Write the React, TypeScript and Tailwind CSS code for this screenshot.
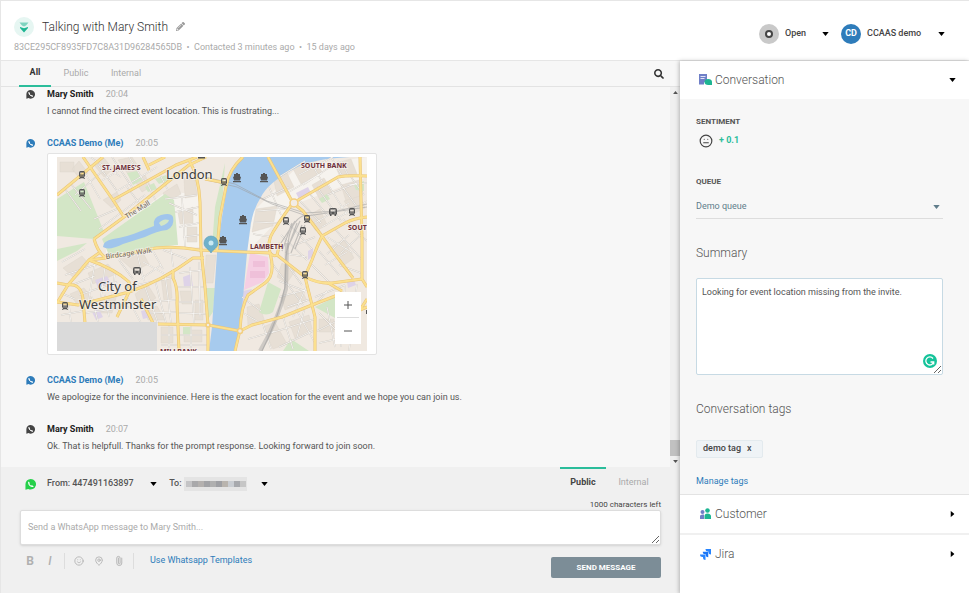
import React from "react";
import { MapPin, Meh, Paperclip, Smile } from "lucide-react";
import { FaPencilAlt, FaSearch } from "react-icons/fa";
import clsx from "clsx";

type Message = {
  author: string;
  time: string;
  mine?: boolean;
  text?: string;
};

const messages: Message[] = [
  {
    author: "Mary Smith",
    time: "20:04",
    text: "I cannot find the cirrect event location. This is frustrating...",
  },
  { author: "CCAAS Demo (Me)", time: "20:05", mine: true },
  {
    author: "CCAAS Demo (Me)",
    time: "20:05",
    mine: true,
    text: "We apologize for the inconvinience. Here is the exact location for the event and we hope you can join us.",
  },
  {
    author: "Mary Smith",
    time: "20:07",
    text: "Ok. That is helpfull. Thanks for the prompt response. Looking forward to join soon.",
  },
];

const Caret = ({ className }: { className?: string }) => (
  <svg viewBox="0 0 8 5" aria-hidden="true" className={clsx("h-1 w-[7px] shrink-0 fill-current", className)}>
    <path d="M0 0h8L4 5z" />
  </svg>
);

const WhatsappBubble = ({ className }: { className?: string }) => (
  <svg viewBox="0 0 24 24" aria-hidden="true" className={clsx("shrink-0", className)}>
    <path fill="currentColor" d="M12.500 0a11.500 11.500 0 1 1-5.500 21.600L1 23.500V12A11.500 11.500 0 0 1 12.500 0z" />
    <path
      fill="none"
      stroke="#fff"
      strokeWidth="2.600"
      strokeLinecap="round"
      d="M8 7.500C8 12.500 12 16.300 17 16.300M8 7.200l1 2.400M17.300 16.300l-2.600-1.300"
    />
  </svg>
);

/* MAP */
const majorRoads = [
  "M186 0Q172 12 169 30L163 60 160 93",
  "M211 0L236 46",
  "M236 46L281 20Q290 18 310 19",
  "M236 46Q228 56 216 75 210 84 213 96",
  "M236 46L246 54 265 79 277 96 296 121",
  "M265 79L288 66Q298 61 310 60",
  "M265 79Q259 92 255 103L248 119",
  "M99 91Q120 89 142 93L213 96Q216 100 220 98L248 120Q262 127 275 126L305 122",
  "M213 96Q219 118 208 126L191 138Q184 150 183 173L178 194",
  "M220 98L223 86M248 120L258 160V194",
  "M151 168L183 174 195 168 225 160 255 148 286 136",
  "M305 83V122L310 130M303 0L305 83M271 126L285 134",
  "M144 93L148 130 151 168V194",
  "M0 38L46 0M26 0L56 43 119 8 140 0",
  "M37 82L67 60 132 8 149 0M56 43L67 60",
  "M132 3Q142 20 143 45L144 93M86 0L92 13M92 8L108 0",
  "M37 82Q41 96 49 101L99 91M42 96L32 103 11 128 0 146",
  "M32 103Q58 112 72 125V135L60 160M32 103L49 101",
  "M0 126L11 128Q24 126 26 142L28 166M0 145L21 148 72 135Q105 124 136 101L147 101",
  "M116 113V121Q121 130 120 146L122 194M101 167L152 168M84 142L96 166",
  "M310 150L303 153 310 142M148 22L169 26",
];

const minorRoads = [
  "M8 32L24 54M14 27L34 52M28 16L43 42M40 6L60 34M55 0L75 30M72 0L88 26M33 0L64 20M18 38L48 12M44 24L75 6M60 34L100 10",
  "M37 62L60 52M42 72L88 38M70 30L85 50M88 22L99 44M103 18L111 33M108 42L140 38M118 55L142 50M122 70L142 66M126 80L142 78M125 40L128 90M112 46L140 58",
  "M5 105L28 92M8 118L44 106M15 128L38 119M22 138L60 125M4 136L18 142M4 158L26 154M12 148L14 166M35 140L41 165M48 138L52 160M38 106L31 146M48 110L44 140M58 115L55 142M28 156L72 150M70 140L84 166M88 130L101 166M98 123L109 166M108 116L114 166M88 145L119 143M92 156L120 155M80 128L118 120M84 122L104 108M86 105L110 118",
  "M122 116L146 113M121 130L148 130M122 145L149 145M121 156L150 157M133 110L137 166M142 105L143 160M104 178H151M112 168V194M134 168V194M104 188H151M80 96L87 124M62 103L76 122M96 94L106 112M106 93L130 102M114 92L116 110",
  "M206 42L232 30M200 54L228 52M197 65L222 66M196 77L214 80M212 30L224 58M222 20L248 4M230 36L265 16M241 42L264 66M252 36L270 58M260 30L284 64M270 26L290 58M280 22L300 50M246 28L282 4M242 18L276 0M254 6L266 26M284 4L292 20M258 66L292 46M265 70L310 44M294 20L307 38M270 38L300 26M274 0L285 19M290 28L310 26",
  "M231 66L255 92M224 78L250 103M270 80L296 96M278 72L305 103M290 68L310 84M284 96L306 76M270 97L292 78M262 94L282 118M253 106L273 126M282 108L304 116M268 108L290 95M286 62L301 74M230 97L250 100M238 88L258 80",
  "M186 156L200 164M185 140L204 154M191 182L218 174M205 164L214 192M226 160L236 192M240 154L258 186M248 150L240 180M214 176L258 162M222 190L256 174M262 156L286 180M260 174L302 153M262 186L298 178M270 150L278 190M258 140L288 128M222 124L248 134M214 105L246 148M232 110L245 128M222 140L252 132M230 150L254 142M250 128L236 160M270 134L258 148M288 128L284 190M300 127L292 194",
];

const blocks = [
  "M3 5h14v10H3zM22 4l9 12-8 6-8-10zM37 8l10 12 9-8-9-11zM61 3l12 17 10-8-8-12zM78 24l10-6 6 12-9 5zM46 43l14-8 4 8-9 8z",
  "M127 21l11 2 2 16-12 2zM121 56l15-6v16l-13 1zM130 70h10v15h-10zM106 36l14-9 4 10-14 8z",
  "M6 111l19-12 7 8-14 15zM31 116l20-9 8 10-23 10zM13 137l14-6 8 10-16 5zM42 142l18-5-5 19H43zM78 137l13-9 8 13-16 10zM88 153l12-4 8 14H91zM104 120l9-3 2 24-8 3zM123 134h12v13h-10zM138 143h8v20h-8zM127 173h18v12h-18zM104 170h12v16h-12zM60 99l25-5 7 13-15 7z",
  "M199 52l21-3-4 20-21 6zM217 24l13-8 7 14-17 9zM235 10l22-9 8 14-21 12zM255 28l12-7 9 14-13 8zM277 6l17-4 6 15-17 3zM249 60l14-8 7 16-11 6zM284 28l18-5 2 20-14 4z",
  "M225 106l13 8-8 12-10-6zM190 150l12-3 6 18-17 4zM206 170l12-5 12 22-14 5zM232 165l20-7 3 14-17 9zM224 140l22-5 4 9-22 9zM273 90l14-7 10 18-11 8zM262 162h15v13h-15zM287 44l16-5 5 12-12 6zM149 98h10l-3 28h-8z",
];

const trainStops = [
  [25, 18],
  [25, 36],
  [167, 25],
  [229, 64],
  [250, 62],
  [246, 74],
  [295, 55],
  [248, 118],
  [8, 149],
];
const busStops = [
  [80, 114],
  [276, 55],
];
const piers = [
  [180, 21],
  [207, 21],
  [186, 63],
  [166, 84],
];

const LocationMap = () => (
  <div className="relative">
    <svg viewBox="0 0 310 194" role="img" aria-label="Map of Westminster and Lambeth" className="block w-full">
      <rect width="310" height="194" fill="#f0e9e1" />
      <path d="M49 80L110 34 143 38V90L99 91 49 101zM196 55L240 10 310 0V20L236 48 190 95z" fill="#f6f3ee" />
      <g fill="#e7dfd5" stroke="#dcd3c9" strokeWidth=".4">
        {blocks.map((d) => (
          <path key={d} d={d} />
        ))}
      </g>
      <g fill="#d3e6c6">
        <path d="M0 42L27 25 47 75 37 82 0 79z" />
        <path d="M45 82L108 37 117 43 121 88 98 90 52 98z" />
        <path d="M70 16l10-2 5 9-9 5zM88 30l9-4 3 6-9 3zM98 22l11-4 3 5-10 4z" />
        <path d="M168 6L164 66 158 90 155 90 158 50zM149 131h9l-2 24-7 10z" />
        <path d="M211 125L224 132 216 155Q209 160 202 155zM258 150L278 140V161zM234 182L252 194H226z" />
        <path d="M297 28l10-4v10l-8-1zM262 42l8-5 3 5-8 4zM126 170h8v8h-8zM0 92L30 86 20 94 0 104z" />
      </g>
      <g fill="#ded3e8">
        <path d="M239 36l12-6 3 6-12 6zM126 120l8-3 2 12-9 1zM38 123l12-4 4 7-13 5zM84 154l8-2 2 8-8 2zM35 155l7-3 4 8-7 3zM290 125l7-2 2 5-8 3zM251 94l5-3v8l-5 4zM186 134l9-2-7 18-4 4z" />
      </g>
      <path d="M193 96L211 100 212 116 206 125 187 133z" fill="#f5cfe3" />
      <path d="M196 104h12v6h-12zM193 114h15v7h-15z" fill="#efc0d9" />
      <path
        d="M186 0H293Q252 2 235 13 211 26 204 40 195 54 193 73L190 96 183 174 179 194H152L155 170 160 96 165 60 171 23Q174 8 186 0z"
        fill="#a7cbee"
      />
      <path
        d="M46 90Q46 84 56 82 70 80 84 74L97 69Q95 61 104 58 114 55 116 60 118 69 110 73 100 74 88 80L66 87Q52 94 46 90z"
        fill="#a0c5ec"
      />
      <path d="M102 66Q106 61 112 63 111 67 104 69z" fill="#d3e6c6" />
      <g fill="none" stroke="#cbc5bd" strokeWidth="1.400">
        {minorRoads.map((d) => (
          <path key={d} d={d} />
        ))}
      </g>
      <g fill="none" stroke="#fbfaf7" strokeWidth=".8">
        {minorRoads.map((d) => (
          <path key={d} d={d} />
        ))}
      </g>
      {/* tracks go over the water */}
      <g fill="none" stroke="#9c9c9c" strokeOpacity=".55">
        <path d="M148 20L178 27 210 44 248 56 280 54 310 47M150 23L180 30 215 47 250 59 310 50" />
        <path
          d="M248 58Q236 62 232 80L229 100 228 130Q222 160 205 194M235 66L225 94M240 66L229 96M245 68L234 96M238 64L224 86M248 68L238 92M243 64L231 90"
          strokeWidth="1.200"
        />
        <path d="M230 86L229 132Q220 165 203 194" strokeWidth="4" strokeOpacity=".4" />
      </g>
      <g fill="none" stroke="#e9c377" strokeWidth="3" strokeLinejoin="round">
        {majorRoads.map((d) => (
          <path key={d} d={d} />
        ))}
      </g>
      <g fill="none" stroke="#fbe08f" strokeWidth="2" strokeLinejoin="round">
        {majorRoads.map((d) => (
          <path key={d} d={d} />
        ))}
      </g>
      <g fill="#f2ece5" stroke="#f3cf80" strokeWidth="1.500">
        <circle cx="237" cy="46" r="4" />
        <circle cx="183" cy="174" r="2.500" />
        <circle cx="151" cy="168" r="2" />
      </g>
      <g fill="#555">
        {trainStops.map(([x, y]) => (
          <path
            key={`${x}-${y}`}
            fillRule="evenodd"
            transform={`translate(${x - 3} ${y - 4})`}
            d="M1.500 0h3Q6 0 6 2v3L5 6.200 6 8H5L4.500 7.200h-3L1 8H0l1-1.800L0 5V2Q0 0 1.500 0zM1.200 1.500v2h3.600v-2zM1.500 4.500v1h1v-1zM3.500 4.500v1h1v-1z"
          />
        ))}
        {busStops.map(([x, y]) => (
          <path
            key={`${x}-${y}`}
            fillRule="evenodd"
            transform={`translate(${x - 4} ${y - 4})`}
            d="M2 0h4q2 0 2 2v4.500H7V8H5.500V6.500h-3V8H1V6.500H0V2q0-2 2-2zM1.500 1.500v2.200h5V1.500zM1.500 4.600v1h1v-1zM5.500 4.600v1h1v-1z"
          />
        ))}
        {piers.map(([x, y]) => (
          <path
            key={`${x}-${y}`}
            transform={`translate(${x - 4} ${y - 5})`}
            d="M3 0h2v1h2v2.500l1 .5-1 3.500H1L0 4l1-.5V1h2zM0 8h8v1.200H0z"
          />
        ))}
        <path d="M141 0h7v1.500h-7zM309 153h1v4h-1z" />
      </g>
      <rect y="165" width="100" height="29" fill="#dadada" />
      <g className="font-['Noto_Sans']" fill="#3d3d3d" stroke="#f7f3ee" strokeWidth="2" strokeOpacity=".6" paintOrder="stroke">
        <g fontSize="13">
          <text x="109" y="22">London</text>
          <text x="41" y="134">City of</text>
          <text x="22" y="152">Westminster</text>
        </g>
        <g fontSize="7" fill="#6b6257">
          <text transform="translate(70 62) rotate(-32)">The Mall</text>
          <text transform="translate(49 102) rotate(-8)">Birdcage Walk</text>
        </g>
        <g fontSize="7" fontWeight="700" fill="#6e2f3a">
          <text x="45" y="13">ST. JAMES'S</text>
          <text x="244" y="11">SOUTH BANK</text>
          <text x="193" y="92">LAMBETH</text>
          <text x="291" y="73">SOUT</text>
          <text x="103" y="197">MILLBANK</text>
        </g>
      </g>
      <path d="M154 96C152 92 147 91 147 86a7 7 0 0 1 14 0c0 5-5 6-7 10z" fill="#6fb1cb" stroke="#5a9db8" strokeWidth=".6" />
      <circle cx="154" cy="86" r="2.500" fill="#c9e9f3" />
    </svg>
    <div className="absolute right-1.5 bottom-[7px] flex w-[26px] flex-col bg-white px-0.5 text-[#555]">
      <button type="button" aria-label="Zoom in" className="flex h-[26px] items-center justify-center border-b border-[#ddd]">
        <svg viewBox="0 0 8 8" className="size-2 stroke-current">
          <path d="M0 4h8M4 0v8" />
        </svg>
      </button>
      <button type="button" aria-label="Zoom out" className="flex h-[26px] items-center justify-center">
        <svg viewBox="0 0 8 8" className="size-2 stroke-current">
          <path d="M0 4h8" />
        </svg>
      </button>
    </div>
  </div>
);

/* HEADER */
const PageHeader = () => (
  <header className="flex h-[60px] shrink-0 items-center justify-between border-b border-[#e6e6e6] bg-white pr-6 pl-[13px]">
    <div className="pt-3">
      <div className="flex items-center gap-2">
        <svg viewBox="0 0 20 20" aria-hidden="true" className="size-5">
          <circle cx="10" cy="10" r="10" fill="#e6f6f2" />
          <path d="M5.500 5.500h9L12 8.500 10 9.500 8 8.500z" fill="#7ed3bf" />
          <path d="M6 10l4 1.200 4-1.200v1l-4 4.500-4-4.500z" fill="#1db592" />
        </svg>
        <h1 className="text-[12px] leading-5 font-light text-[#333]">Talking with Mary Smith</h1>
        <button type="button" aria-label="Rename conversation" className="text-[#999]">
          <FaPencilAlt className="size-[9px]" />
        </button>
      </div>
      <p className="text-[9px] leading-5 text-[#aaa]">
        83CE295CF8935FD7C8A31D96284565DB &nbsp;•&nbsp; Contacted 3 minutes ago &nbsp;•&nbsp; 15 days ago
      </p>
    </div>
    <div className="flex items-center gap-3 pt-1.5 text-[9px] font-medium text-[#444]">
      <label className="flex items-center gap-1.5">
        <span className="flex size-5 items-center justify-center rounded-full bg-[#c9c9c9]">
          <span className="size-2 rounded-full border-2 border-[#444] bg-white" />
        </span>
        <select aria-label="Status" className="w-[31px] appearance-none pt-px outline-none">
          <option>Open</option>
        </select>
        <Caret className="text-black" />
      </label>
      <button type="button" className="flex items-center gap-1.5">
        <span className="flex size-5 items-center justify-center rounded-full bg-[#2e7cba] text-[9px] font-bold text-white">
          CD
        </span>
        <span className="w-[59px] pt-px text-left">CCAAS demo</span>
        <Caret className="ml-1.5 text-black" />
      </button>
    </div>
  </header>
);

const MessageItem = ({ message }: { message: Message }) => (
  <li className="flex gap-3">
    <WhatsappBubble className={clsx("mt-[3px] size-[9px]", message.mine ? "text-[#2e7cba]" : "text-[#444]")} />
    <div>
      <div className="flex gap-3 text-[9px] leading-[15px]">
        <span className={clsx("font-bold", message.mine ? "text-[#2e7cba]" : "text-[#222]")}>{message.author}</span>
        <span className="text-[#aaa]">{message.time}</span>
      </div>
      {message.text ? (
        <p className="text-[9px] leading-[18px] text-[#555]">{message.text}</p>
      ) : (
        <div className="mt-0.5 mb-0.5 w-[330px] rounded-xs border border-[#e3e3e3] bg-white px-[9px] py-[3px]">
          <LocationMap />
        </div>
      )}
    </div>
  </li>
);

const Scrollbar = () => (
  <div aria-hidden="true" className="flex w-2.5 shrink-0 flex-col items-center bg-[#f0f0f0] py-1 text-[#555]">
    <Caret className="h-[3px] w-[5px] rotate-180" />
    <div className="mt-auto mb-1 h-4 w-full bg-[#c1c1c1]" />
    <Caret className="h-[3px] w-[5px]" />
  </div>
);

/* MESSAGE COMPOSER */
const mosaic = ["#c4c4c6", "#a9a9ab", "#b4b1af", "#a2a3a6", "#b0b0b0", "#9fa0a4", "#b9b4ae", "#c9cdd2", "#a7a9ad", "#c6c6c6"];

const Composer = () => (
  <form className="shrink-0 bg-[#f0f0f0] pr-[19px] pb-4 pl-[19px]" onSubmit={(e) => e.preventDefault()}>
    <div className="flex items-start justify-between">
      <div className="flex h-8 items-center pt-0.5 pl-[5px] text-[9px] font-medium text-[#555]">
        <WhatsappBubble className="size-[11px] text-[#25d04a]" />
        <label className="ml-[11px] flex items-center gap-0.5">
          From:
          <select className="w-[76px] appearance-none outline-none">
            <option>447491163897</option>
          </select>
          <Caret className="text-black" />
        </label>
        <button type="button" aria-label="Recipient number" className="ml-3 flex items-center gap-0.5">
          To:
          <svg viewBox="0 0 63 14" className="h-3.5 w-[63px]" aria-hidden="true">
            <rect width="63" height="14" fill="#e4e4e4" />
            {mosaic.map((color, i) => (
              <rect key={i} x={2 + i * 6} y="4" width="6" height="6" fill={color} />
            ))}
          </svg>
          <Caret className="ml-3 text-black" />
        </button>
      </div>
      <div className="flex text-[9px] leading-[26px]">
        <button type="button" className="w-[46px] border-t-2 border-[#2bbd9b] font-bold text-[#444]">
          Public
        </button>
        <button type="button" className="w-[55px] border-t-2 border-transparent text-[#aaa]">
          Internal
        </button>
      </div>
    </div>
    <p className="text-right text-[8px] leading-[11px] text-[#444]">1000 characters left</p>
    <textarea
      aria-label="Message"
      placeholder="Send a WhatsApp message to Mary Smith..."
      className="block h-[35px] w-full rounded-xs border border-[#ddd] bg-white px-[7px] py-2 text-[9px] leading-4 shadow outline-none placeholder:text-[#aaa]"
    />
    <div className="mt-3 flex items-start">
      <div className="flex h-2 items-center text-[#b0b0b0]">
        <button type="button" aria-label="Bold" className="w-5 text-[12px] font-bold">
          B
        </button>
        <button type="button" aria-label="Italic" className="w-5 text-[12px] font-medium italic">
          I
        </button>
        <span className="mx-1 h-4 w-px bg-[#ddd]" />
        <button type="button" aria-label="Insert emoji" className="flex w-5 justify-center">
          <Smile className="size-2.5" />
        </button>
        <button type="button" aria-label="Share location" className="flex w-5 justify-center">
          <MapPin className="size-2.5" />
        </button>
        <button type="button" aria-label="Attach file" className="flex w-5 justify-center">
          <Paperclip className="size-2.5 -rotate-45" />
        </button>
        <span className="mx-1 h-4 w-px bg-[#ddd]" />
        <a href="#templates" className="ml-3 text-[9px] text-[#2e7cba]">
          Use Whatsapp Templates
        </a>
      </div>
      <button type="submit" className="ml-auto h-[21px] w-[110px] rounded-xs bg-[#7c8d97] text-[8px] font-bold text-white">
        SEND MESSAGE
      </button>
    </div>
  </form>
);

/* SIDEBAR */
const ConversationIcon = () => (
  <svg viewBox="0 0 13 12" aria-hidden="true" className="h-3 w-[13px]">
    <path d="M0 0h8v6L5 8.500v2H0z" fill="#6f7fc7" />
    <path d="M1.500 2.500h5M1.500 4.500h4" stroke="#dfe3f6" />
    <path d="M9.200 5c2.300 0 3.800 1.300 3.800 3v3H9.200C7 11 5.500 9.800 5.500 8s1.400-3 3.700-3z" fill="#1db592" />
  </svg>
);

const CustomerIcon = () => (
  <svg viewBox="0 0 11 12" aria-hidden="true" className="h-3 w-[13px]">
    <circle cx="2.500" cy="4" r="2" fill="#6f7fc7" />
    <path d="M0 11V8q0-1.500 2.500-1.500h1.500V11z" fill="#6f7fc7" />
    <circle cx="7.500" cy="2.500" r="2.300" fill="#1db592" />
    <path d="M4.500 11V8q0-2.500 3-2.500T11 8v3z" fill="#1db592" />
  </svg>
);

const JiraIcon = () => (
  <svg viewBox="0 0 22 22" aria-hidden="true" className="h-[11px] w-[13px]">
    <path d="M11 0h11v11a5 5 0 0 1-5-5V5h-1a5 5 0 0 1-5-5z" fill="#2684ff" />
    <path d="M5.500 5.500h11v11a5 5 0 0 1-5-5v-1h-1a5 5 0 0 1-5-5z" fill="#1a75f5" />
    <path d="M0 11h11v11a5 5 0 0 1-5-5v-1H5a5 5 0 0 1-5-5z" fill="#2684ff" />
  </svg>
);

type PanelHeaderProps = { icon: React.ReactNode; title: string; open?: boolean };

const PanelHeader = ({ icon, title, open }: PanelHeaderProps) => (
  <button
    type="button"
    aria-expanded={!!open}
    className="flex h-[38px] w-full items-center gap-[3px] bg-white pr-[13px] pl-[19px] text-[12px] font-light text-[#555]"
  >
    {icon}
    {title}
    <Caret className={clsx("ml-auto text-black", !open && "-rotate-90")} />
  </button>
);

const Sidebar = () => (
  <aside className="z-10 flex w-[289px] shrink-0 flex-col bg-white shadow-[-1px_0_4px_rgba(0,0,0,0.25)]">
    <PanelHeader icon={<ConversationIcon />} title="Conversation" open />
    <div className="border-b border-[#e3e3e3] bg-[#f7f7f7] pt-[17px] pr-[26px] pb-1 pl-4 text-[#555]">
      <h2 className="text-[8px] leading-3 font-bold">SENTIMENT</h2>
      <div className="flex h-[26px] items-center gap-1.5 pl-[3px] text-[9px] font-bold text-[#2bbd9b]">
        <Meh className="size-3.5 text-[#444]" />+ 0.1
      </div>
      <label htmlFor="queue" className="mt-[22px] block text-[8px] leading-3 font-bold">
        QUEUE
      </label>
      <div className="flex items-center border-b border-[#ddd] pr-[3px] text-[#607d8b]">
        <select id="queue" className="h-[30px] grow appearance-none pt-2 text-[9px] outline-none">
          <option>Demo queue</option>
        </select>
        <Caret className="mt-2" />
      </div>
      <label htmlFor="summary" className="mt-6 block text-[12px] leading-5 font-light">
        Summary
      </label>
      <div className="relative mt-[15px]">
        <textarea
          id="summary"
          defaultValue="Looking for event location missing from the invite."
          className="block h-[97px] w-full rounded-xs border border-[#c7dae4] bg-white px-[5px] py-1 text-[9px] leading-[18px] outline-none"
        />
        <svg viewBox="0 0 14 14" aria-hidden="true" className="absolute right-1.5 bottom-[7px] size-3.5">
          <circle cx="7" cy="7" r="7" fill="#15c39a" />
          <path d="M10 4.500A4 4 0 1 0 10.700 8M7.500 8h3.200v2.500" fill="none" stroke="#fff" strokeWidth="1.300" />
        </svg>
      </div>
      <h2 className="mt-6 text-[12px] leading-5 font-light">Conversation tags</h2>
      <div className="mt-[21px] flex">
        <span className="flex h-[18px] items-center gap-1.5 rounded-xs border border-[#e3eaee] bg-[#eff3f6] pr-2.5 pl-1.5 text-[9px] font-medium text-[#444]">
          demo tag
          <button type="button" aria-label="Remove demo tag">x</button>
        </span>
      </div>
      <a href="#tags" className="mt-3.5 block text-[9px] leading-[18px] text-[#2e7cba]">
        Manage tags
      </a>
    </div>
    <PanelHeader icon={<CustomerIcon />} title="Customer" />
    <div className="h-0.5 bg-[#f0f0f0]" />
    <PanelHeader icon={<JiraIcon />} title="Jira" />
  </aside>
);

export default function App() {
  return (
    <div className="flex min-h-screen flex-col border-t border-l border-[#e6e6e6] bg-[#f7f7f7] font-[Roboto,sans-serif]">
      <PageHeader />
      <div className="flex grow">
        <main className="flex min-w-0 grow flex-col">
          <nav className="flex h-[26px] shrink-0 items-stretch border-b border-[#e3e3e3] pl-[18px] text-[9px] text-[#aaa]">
            <button type="button" className="-mb-px w-8 border-b-2 border-[#2bbd9b] font-bold text-[#333]">
              All
            </button>
            <button type="button" className="w-[50px]">
              Public
            </button>
            <button type="button" className="w-[50px]">
              Internal
            </button>
            <button type="button" aria-label="Search messages" className="mr-4 ml-auto text-[#333]">
              <FaSearch className="size-2.5" />
            </button>
          </nav>
          <div className="flex grow">
            <ul className="flex min-w-0 grow flex-col gap-4 pb-3 pl-[25px]">
              {messages.map((message, i) => (
                <MessageItem key={i} message={message} />
              ))}
            </ul>
            <Scrollbar />
          </div>
          <Composer />
        </main>
        <Sidebar />
      </div>
    </div>
  );
}
